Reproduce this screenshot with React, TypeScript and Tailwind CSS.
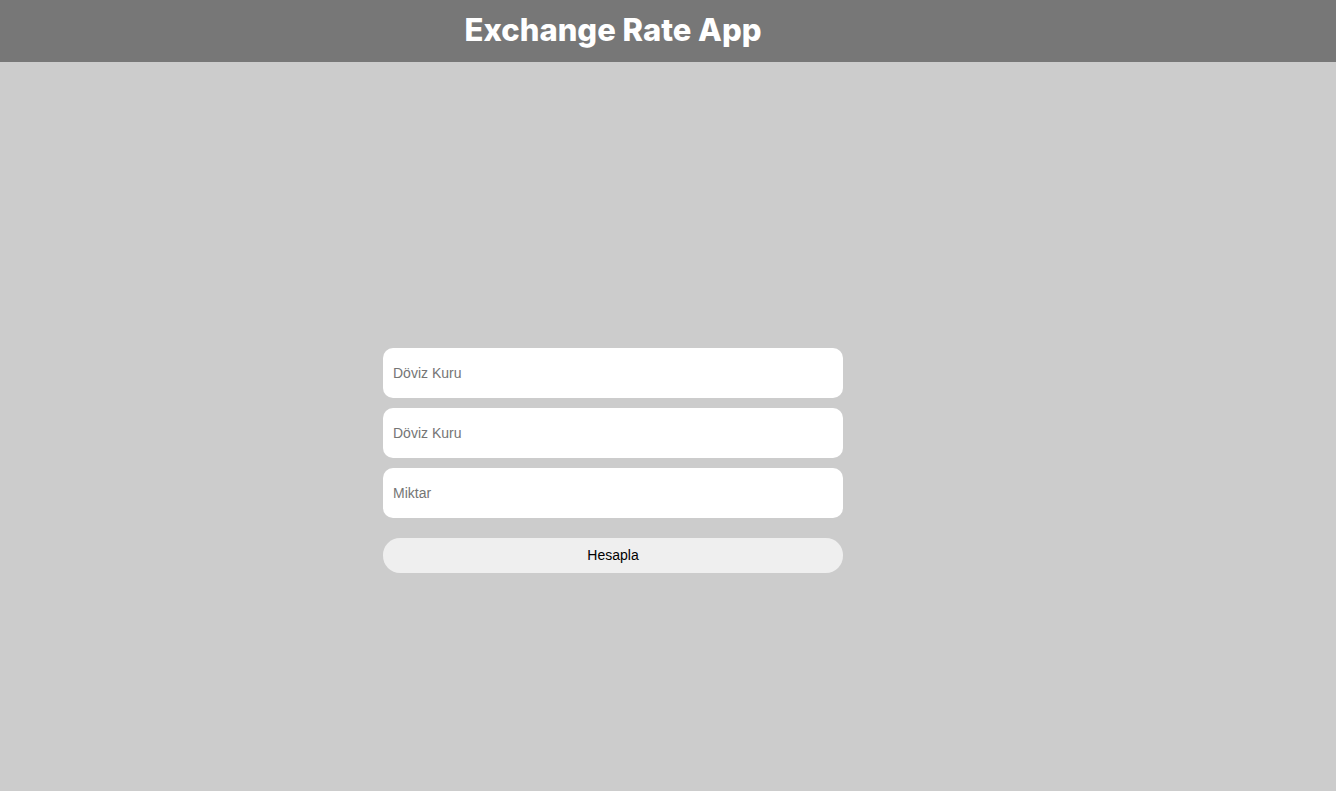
import React from 'react';

export default function App() {
  return (
    <div className="min-h-[791px] bg-[#cccccc] font-['Liberation_Sans',Arial,sans-serif]">
      <header className="h-[62px] bg-[#777777] w-full">
        <div className="w-[1226px] h-full flex items-center justify-center">
          <h1 className="text-white text-[31px] font-extrabold tracking-[0px] font-['Inter',sans-serif] leading-none pb-[4px]">
            Exchange Rate App
          </h1>
        </div>
      </header>
      <main className="w-[1226px] flex justify-center pt-[286px]">
        <div className="w-[460px] flex flex-col">
          <input
            placeholder="Döviz Kuru"
            className="h-[50px] rounded-[10px] bg-white px-[10px] pb-[1px] text-[14px] text-black placeholder:text-[#757575] outline-none"
          />
          <input
            placeholder="Döviz Kuru"
            className="mt-[10px] h-[50px] rounded-[10px] bg-white px-[10px] pb-[1px] text-[14px] text-black placeholder:text-[#757575] outline-none"
          />
          <input
            placeholder="Miktar"
            className="mt-[10px] h-[50px] rounded-[10px] bg-white px-[10px] pb-[1px] text-[14px] text-black placeholder:text-[#757575] outline-none"
          />
          <button className="mt-[20px] h-[35px] rounded-[17px] bg-[#efefef] text-[14px] text-black">
            Hesapla
          </button>
        </div>
      </main>
    </div>
  );
}
